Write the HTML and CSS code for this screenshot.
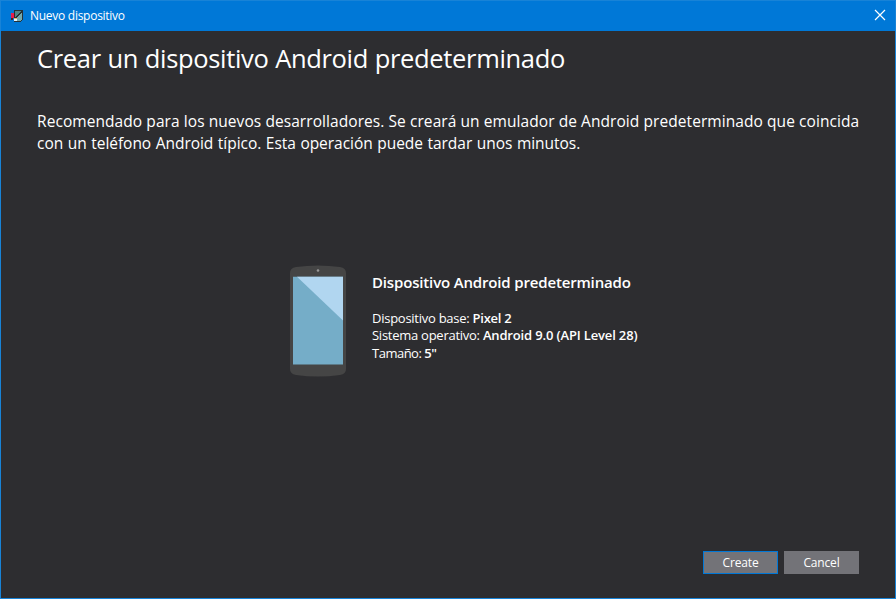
FILE: index.html
```html
<!DOCTYPE html>
<html lang="es">
<head>
<meta charset="utf-8">
<title>Nuevo dispositivo</title>
<link rel="stylesheet" href="styles.css">
</head>
<body>
<div class="window">
  <header class="titlebar">
    <svg class="app-icon" viewBox="0 0 14 14" shape-rendering="crispEdges" aria-hidden="true">
      <path d="M4 1h9v9l-3 3H4z" fill="#263238"/>
      <path d="M5 2h7L5 9z" fill="#4f8588"/>
      <path d="M12 2v8l-2 2H6V9z" fill="#75a9ad"/>
      <path d="M11 2h1v1L6 9H5V8z" fill="#263238"/>
      <path d="M1 4h3v5H1z" fill="#e51c50"/>
      <path d="M1 9h2v2H1zM4 5h1v4H4z" fill="#422028"/>
      <path d="M4 9h3v1H4z" fill="#e8b36a"/>
      <path d="M4 10h3v2H4z" fill="#e5f3ff"/>
    </svg>
    <span class="caption">Nuevo dispositivo</span>
    <svg class="close" viewBox="0 0 12 12" role="img" aria-label="Cerrar"><path d="M1 1l10 10M11 1L1 11"/></svg>
  </header>
  <main class="content">
    <h1>Crear un dispositivo Android predeterminado</h1>
    <p class="intro">
      <span class="line first">Recomendado para los nuevos desarrolladores. Se creará un emulador de Android predeterminado que coincida</span>
      <span class="line second">con un teléfono Android típico. Esta operación puede tardar unos minutos.</span>
    </p>
    <section class="device">
      <svg class="phone" viewBox="0 0 58 112" aria-hidden="true">
        <path d="M1 8Q1 3 7 2Q29-1 51 2Q57 3 57 8V104Q57 109 51 110Q29 113 7 110Q1 109 1 104z" fill="#454545"/>
        <circle cx="29" cy="5.500" r="1.300" fill="#999"/>
        <path d="M4 11.700h50v87.800H4z" fill="#75adc8"/>
        <path d="M8 11.700h46v43.800z" fill="#b1d6f0"/>
      </svg>
      <div class="details">
        <h2>Dispositivo Android predeterminado</h2>
        <div class="spec base">Dispositivo base: <b>Pixel 2</b></div>
        <div class="spec system">Sistema operativo: <b>Android 9.0 (API Level 28)</b></div>
        <div class="spec size">Tamaño: <b>5"</b></div>
      </div>
    </section>
    <footer class="actions">
      <button class="primary">Create</button>
      <button>Cancel</button>
    </footer>
  </main>
</div>
</body>
</html>
```
FILE: styles.css
```css
* { box-sizing: border-box; }
body { margin: 0; font-family: "Open Sans", "Noto Sans", sans-serif; color: #fff; }
.window { display: flex; flex-direction: column; width: 896px; height: 599px; background: #2d2d30; border: 1px solid #1883d7; }
.titlebar { display: flex; align-items: center; flex: none; height: 30px; padding: 0 9px; background: #0078d7; }
.app-icon { width: 14px; height: 14px; margin-right: 6px; }
.caption { font-size: 12px; line-height: 16px; letter-spacing: -0.27px; white-space: nowrap; }
.close { width: 12px; height: 12px; margin: -2px 0 0 auto; fill: none; stroke: #fff; stroke-width: 1.2; }
.content { display: flex; flex-direction: column; flex: 1; padding: 9px 36px 24px; }
h1 { margin: 0; font-size: 25.5px; line-height: 36px; font-weight: 400; letter-spacing: -0.33px; word-spacing: 0.4px; white-space: nowrap; }
.intro { margin: 34px 0 0; font-size: 15.5px; line-height: 22px; }
.line { display: block; white-space: nowrap; }
.first { letter-spacing: 0.07px; }
.second { letter-spacing: -0.04px; word-spacing: 0.6px; }
.device { display: flex; margin: 111px 0 0 252px; }
.phone { flex: none; width: 58px; height: 112px; }
.details { padding: 6px 0 0 25px; white-space: nowrap; }
h2 { margin: 0 0 17px; font-size: 15px; line-height: 22px; font-weight: 600; letter-spacing: -0.16px; }
.spec { font-size: 13px; line-height: 17px; letter-spacing: -0.26px; }
.spec b { font-weight: 600; }
.system b { letter-spacing: -0.15px; }
.size { margin-top: 1px; letter-spacing: -0.5px; }
.actions { display: flex; justify-content: flex-end; gap: 6px; margin-top: auto; }
button { width: 75px; height: 23px; padding: 0; border: 1px solid #737378; background: #737378; color: #fff; font-family: inherit; font-size: 12px; line-height: 20px; letter-spacing: -0.15px; }
button.primary { border-color: #0078d7; }
```
